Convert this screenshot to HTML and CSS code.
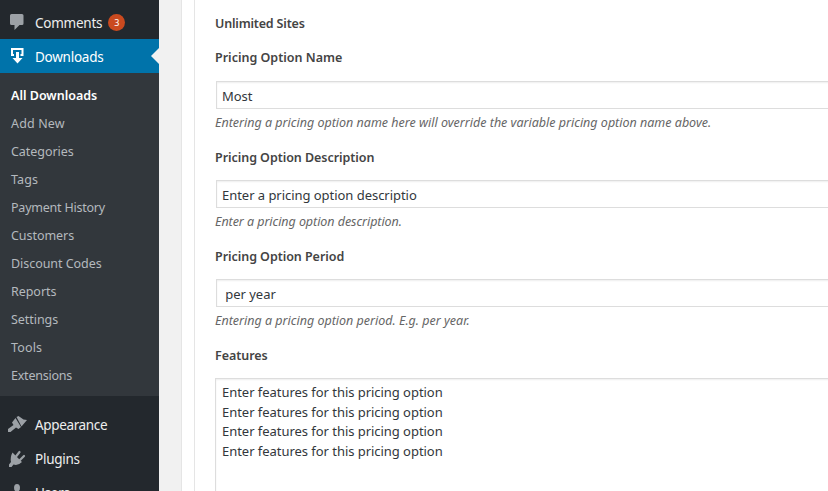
FILE: index.html
```html
<!DOCTYPE html>
<html lang="en">
<head>
<meta charset="utf-8">
<title>Downloads</title>
<link rel="stylesheet" href="styles.css">
</head>
<body>
<div class="layout">
  <nav class="sidebar">
    <a class="menu-item">
      <svg class="icon" viewBox="0 0 20 20"><path d="M4.500 2h10.500Q16.500 2 16.500 3.500v8Q16.500 13 15 13h-2.500L7.500 18v-5H4.500Q3 13 3 11.500V3.500Q3 2 4.500 2z"/></svg>
      <span class="menu-label">Comments</span><span class="badge">3</span>
    </a>
    <a class="menu-item current">
      <svg class="icon" viewBox="0 0 20 20"><path d="M4 2h12.500v8h-3V8h1V4H6v4h1v2H4z"/><path d="M9 6h3v6h3.500L10.500 17.500 5.500 12H9z"/></svg>
      <span class="menu-label">Downloads</span>
    </a>
    <div class="submenu">
      <a class="active">All Downloads</a>
      <a class="wide">Add New</a>
      <a>Categories</a>
      <a class="wide">Tags</a>
      <a class="tight">Payment History</a>
      <a>Customers</a>
      <a>Discount Codes</a>
      <a>Reports</a>
      <a>Settings</a>
      <a class="wide">Tools</a>
      <a class="tight">Extensions</a>
    </div>
    <a class="menu-item lower">
      <svg class="icon" viewBox="0 0 20 20"><path d="M9.500 2 11.500 1 16.500 4.500 20 5 14.500 11.500z"/><path d="M8.500 3 14 12 11.500 14 9 12.500 3.500 17 1 17V14L6.500 10 5 7.500z"/></svg>
      <span class="menu-label appearance">Appearance</span>
    </a>
    <a class="menu-item lower">
      <svg class="icon" viewBox="0 0 20 20"><path d="M5.500 3.500 15 13Q11 17 6.500 15.500L4.500 18 2 18 2 15.500 4 13Q3 8 5.500 3.500z"/><path class="prong" d="M9 7.500 12.500 3M13 11l4-4"/></svg>
      <span class="menu-label">Plugins</span>
    </a>
    <a class="menu-item lower">
      <svg class="icon" viewBox="0 0 20 20"><ellipse cx="10" cy="4.800" rx="3" ry="3.800"/><path d="M8.500 7h3v2l4 2v7h-11v-7l4-2z"/></svg>
      <span class="menu-label">Users</span>
    </a>
  </nav>
  <main class="content">
    <section class="postbox">
      <div class="panel">
        <p class="label sites">Unlimited Sites</p>
        <p class="label first">Pricing Option Name</p>
        <div class="field">Most</div>
        <p class="help">Entering a pricing option name here will override the variable pricing option name above.</p>
        <p class="label">Pricing Option Description</p>
        <div class="field">Enter a pricing option descriptio</div>
        <p class="help short">Enter a pricing option description.</p>
        <p class="label">Pricing Option Period</p>
        <div class="field">&nbsp;per year</div>
        <p class="help">Entering a pricing option period. E.g. per year.</p>
        <p class="label">Features</p>
        <div class="area">
          <div>Enter features for this pricing option</div>
          <div>Enter features for this pricing option</div>
          <div>Enter features for this pricing option</div>
          <div>Enter features for this pricing option</div>
        </div>
      </div>
    </section>
  </main>
</div>
</body>
</html>
```
FILE: styles.css
```css
* { box-sizing: border-box; }
body { margin: 0; overflow: hidden; font-family: "Noto Sans", sans-serif; font-size: 13px; color: #32373c; background: #f1f1f1; }
p { margin: 0; }
.layout { display: flex; height: 491px; overflow: hidden; }
.sidebar { width: 159px; flex: none; background: #23282d; padding-top: 5px; }
.menu-item { display: flex; align-items: center; height: 34px; padding-left: 7px; color: #eee; font-size: 13.5px; letter-spacing: -0.25px; white-space: nowrap; }
.menu-label { padding-top: 2px; }
.lower .menu-label { padding-top: 0; }
.lower .appearance { letter-spacing: -0.35px; }
.icon { width: 20px; height: 20px; margin-right: 8px; fill: #9ca1a6; flex: none; }
.prong { fill: none; stroke: #9ca1a6; stroke-width: 2.2; stroke-linecap: round; }
.current { background: #0073aa; color: #fff; position: relative; }
.current .icon { fill: #fff; }
.current::after { content: ""; position: absolute; right: 0; top: 9px; border: 8px solid transparent; border-left: 0; border-right-color: #f1f1f1; }
.badge { width: 17px; height: 17px; margin-left: 6px; border-radius: 50%; background: #ca4a1f; color: #fff; font-size: 9px; line-height: 17px; text-align: center; }
.submenu { background: #32373c; height: 323px; padding: 9px 0 0 11px; margin-bottom: 12px; }
.submenu a { display: block; height: 28px; line-height: 28px; color: #b4b9be; font-size: 12.5px; letter-spacing: -0.05px; }
.submenu .active { color: #fff; font-weight: 600; letter-spacing: 0; }
.submenu .wide { letter-spacing: 0.15px; }
.submenu .tight { letter-spacing: -0.22px; }
.content { flex: 1; padding-left: 22px; min-width: 0; }
.postbox { height: 491px; border-left: 1px solid #e5e5e5; background: #fff; padding-left: 12px; }
.panel { height: 491px; border-left: 1px solid #e5e5e5; padding: 7px 0 0 20px; white-space: nowrap; }
.label { height: 41px; line-height: 36px; font-weight: 600; font-size: 12.5px; letter-spacing: -0.05px; color: #444; }
.sites { height: 34px; line-height: 34px; letter-spacing: -0.18px; }
.first { line-height: 34px; letter-spacing: 0; }
.field { height: 28px; margin: -1px -10px 0 1px; padding-left: 5px; line-height: 28px; letter-spacing: -0.04px; border: 1px solid #ddd; box-shadow: inset 0 1px 2px rgba(0,0,0,.07); }
.help { height: 31px; padding-top: 4px; line-height: 20px; font-size: 12.5px; font-style: italic; color: #666; }
.short { letter-spacing: -0.05px; }
.area { height: 150px; margin: -1px -10px 0 0; padding: 4px 6px; line-height: 19.6px; letter-spacing: -0.04px; border: 1px solid #ddd; box-shadow: inset 0 1px 2px rgba(0,0,0,.07); }
```
